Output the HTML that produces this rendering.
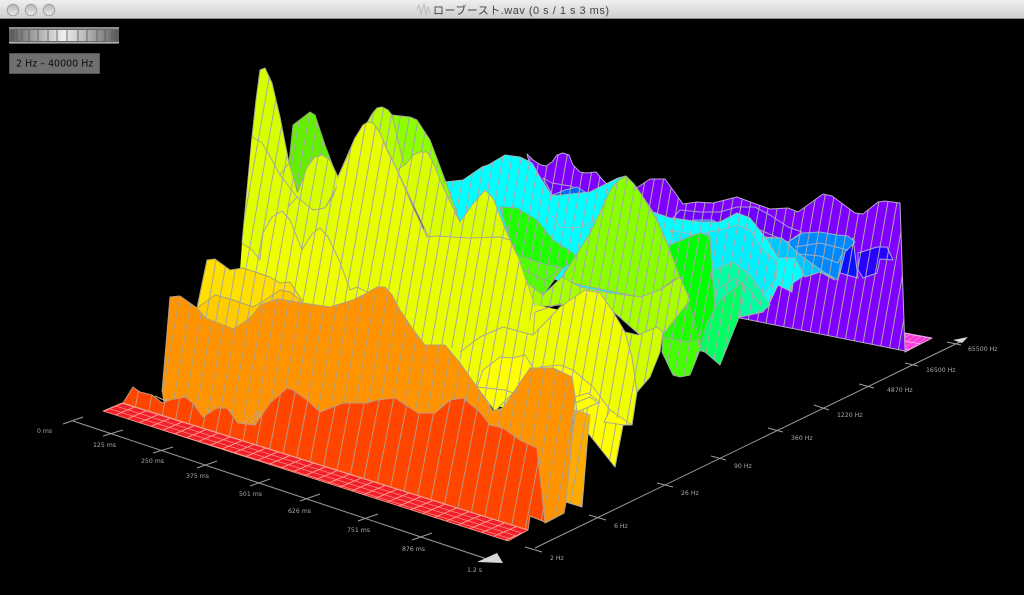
<!DOCTYPE html>
<html><head><meta charset="utf-8"><title>ローブースト.wav</title>
<style>
html,body{margin:0;padding:0;background:#000;width:1024px;height:595px;overflow:hidden}
svg{display:block;filter:blur(.35px)}
.a{font:6.2px "DejaVu Sans",sans-serif;fill:#aaa}
</style></head><body>
<svg width="1024" height="595" viewBox="0 0 1024 595" xmlns="http://www.w3.org/2000/svg" stroke-linejoin="round">
<defs>
<linearGradient id="tb" x1="0" y1="0" x2="0" y2="1"><stop offset="0" stop-color="#efefef"/><stop offset="1" stop-color="#cfcfcf"/></linearGradient>
<linearGradient id="tl" x1="0" y1="0" x2="0" y2="1"><stop offset="0" stop-color="#b4b4b4"/><stop offset="1" stop-color="#ececec"/></linearGradient>
<linearGradient id="sl" x1="0" y1="0" x2="1" y2="0"><stop offset="0" stop-color="#5c5c5c"/><stop offset=".25" stop-color="#a8a8a8"/><stop offset=".5" stop-color="#f0f0f0"/><stop offset=".75" stop-color="#a8a8a8"/><stop offset="1" stop-color="#5c5c5c"/></linearGradient>
<pattern id="g9" width="9" height="20" patternUnits="userSpaceOnUse" patternTransform="rotate(10)"><line x1=".5" y1="0" x2=".5" y2="20" stroke="#aaa8a8" stroke-width="1"/></pattern>
<pattern id="g10" width="10.3" height="20" patternUnits="userSpaceOnUse" patternTransform="rotate(10)"><line x1=".5" y1="0" x2=".5" y2="20" stroke="#a8a89a" stroke-width="1"/></pattern>
<pattern id="g12" width="12" height="20" patternUnits="userSpaceOnUse" patternTransform="rotate(10)"><line x1=".5" y1="0" x2=".5" y2="20" stroke="#b0a080" stroke-width="1"/></pattern>
<pattern id="g14" width="14" height="20" patternUnits="userSpaceOnUse" patternTransform="rotate(11)"><line x1=".5" y1="0" x2=".5" y2="20" stroke="#c09a80" stroke-width="1"/></pattern>
<pattern id="fl" width="100" height="100" patternUnits="userSpaceOnUse" patternTransform="matrix(.1194 .03735 -.0633 .0267 122 403)"><rect width="100" height="100" fill="#f0202c"/><rect width="100" height="14" fill="#ff9a88"/><rect width="12" height="100" fill="#ff9a88"/></pattern>
<pattern id="mg" width="100" height="100" patternUnits="userSpaceOnUse" patternTransform="matrix(.055 .01 -.09 .06 905 333)"><rect width="100" height="100" fill="#f838d8"/><rect width="100" height="12" fill="#ffb0ee"/><rect width="10" height="100" fill="#ffb0ee"/></pattern>
</defs>
<rect width="1024" height="595" fill="#000"/>

<!-- title bar -->
<rect width="1024" height="18" fill="url(#tb)"/>
<rect y="18" width="1024" height="1" fill="#8a8a8a"/>
<g fill="url(#tl)" stroke="#a0a0a0" stroke-width="1"><circle cx="13" cy="10" r="5.7"/><circle cx="31" cy="10" r="5.7"/><circle cx="49" cy="10" r="5.7"/></g>
<path d="M417,9 L419,5 421,14 424,4 426,15 428,7 430,14" fill="none" stroke="#bcbcbc" stroke-width="1.1"/>
<text x="433" y="14" font-family="'Liberation Sans','Noto Sans CJK JP',sans-serif" font-size="11" fill="#444" textLength="176" lengthAdjust="spacing">ローブースト.wav (0 s / 1 s 3 ms)</text>

<!-- slider -->
<rect x="9" y="27" width="110" height="17" fill="#6a6a6a"/>
<rect x="9" y="27.5" width="110" height="1" fill="#b0b0b0"/>
<rect x="9" y="42" width="110" height="1" fill="#b0b0b0"/>
<rect x="9" y="30" width="110" height="11" fill="url(#sl)"/>
<g stroke="#555" stroke-width="1" opacity=".8"><path d="M12,30V41M14,30V41M17,30V41M22,30V41M29,30V41M38,30V41M48,30V41M57,30V41M67,30V41M78,30V41M87,30V41M97,30V41M105,30V41M112,30V41M115,30V41M117,30V41"/></g>
<!-- button -->
<rect x="9.5" y="53.5" width="90" height="20" fill="#707070" stroke="#555"/>
<text x="16" y="66.5" font-family="'DejaVu Sans',sans-serif" font-size="9.5" fill="#0c0c0c">2 Hz – 40000 Hz</text>

<!-- back floor -->
<path d="M905,333 932,338 905,352Z" fill="url(#mg)" stroke="#d8a0d8"/>

<!-- purple back -->
<g fill="#8000ff"><path id="p1" d="M527,154 533,160 541,165 546,166 552,162 557,155 563,153 569,155 573,165 580,172 586,173 596,172 601,178 612,190 638,187 650,179 665,179 673,190 683,204 697,202 713,203 737,197 753,203 770,209 788,208 798,212 823,194 832,196 855,213 863,214 878,202 885,201 900,203 905,351 740,318 560,280Z"/></g><use href="#p1" fill="url(#g9)" stroke="#b4a8c8"/>
<g fill="#7000ff"><path id="p2" d="M673,218 680,210 700,212 720,212 737,207 755,207 770,215 788,227 802,232 788,242 760,230 720,225Z"/></g><use href="#p2" fill="url(#g9)" stroke="#a8a0c8"/>
<g fill="#7000ff"><path id="p3" d="M543,178 552,183 570,186 585,192 553,196Z"/></g><use href="#p3" fill="url(#g9)" stroke="#a8a0c8"/>
<g fill="#0068ff"><path id="b0" d="M553,195 565,190 577,187 585,192 570,198Z"/></g><use href="#b0" fill="url(#g9)" stroke="#9aa8c8"/>
<g fill="#0a88ff"><path id="b1" d="M693,220 713,220 720,225 700,226Z"/></g><use href="#b1" fill="url(#g9)" stroke="#9aa8c8"/>
<!-- right dark blue bits -->
<g fill="#2800ff"><path id="b3" d="M858,253 877,247 887,247 893,260 880,259 877,273 863,278 858,270Z"/></g><use href="#b3" fill="url(#g9)" stroke="#a8a8d8"/>
<g fill="#0c10ff"><path id="b4" d="M845,252 853,238 858,278 840,273Z"/></g><use href="#b4" fill="url(#g9)" stroke="#a8a8d8"/>
<g fill="#0088ff"><path id="b2" d="M788,242 803,233 820,232 837,235 848,236 855,242 845,252 838,280 820,270 795,257Z"/></g><use href="#b2" fill="url(#g9)" stroke="#9ab0c8"/>
<path d="M795,247 820,243 848,250M798,254 820,256 838,263 843,252" fill="none" stroke="#9ab0c8"/>

<!-- cyan -->
<g fill="#00ffff"><path id="c1" d="M445,182 463,180 482,167 488,165 505,155 520,157 532,163 540,177 550,193 553,196 590,192 618,178 626,176 643,197 653,212 670,218 700,222 720,222 737,213 750,218 765,237 777,238 787,248 800,258 805,275 793,283 792,292 778,285 770,302 763,312 740,317 700,330 500,260 460,225Z"/></g><use href="#c1" fill="url(#g9)" stroke="#a0b4b4"/>
<path d="M552,216 560,227 570,228 583,227 595,220" fill="none" stroke="#a0b4b4"/>
<g fill="#00f2ff"><path id="c2" d="M670,230 693,235 720,230 737,225 750,230 763,250 775,260 777,277 763,295 740,317 720,320 690,280Z"/></g><use href="#c2" fill="url(#g9)" stroke="#a0b4b4"/>
<g fill="#00c8ff"><path id="c3" d="M766,238 782,238 800,255 835,280 820,272 805,277 795,258 778,258Z"/></g><use href="#c3" fill="url(#g9)" stroke="#a0b4b4"/>
<g fill="#00ffa0"><path id="s1" d="M713,270 733,262 750,275 765,297 770,305 762,312 740,317 725,330 715,310Z"/></g><use href="#s1" fill="url(#g9)" stroke="#a0b4a8"/>
<path d="M716,290 735,278 750,290 760,305" fill="none" stroke="#a0b4a8"/>

<!-- greens -->
<g fill="#00ff00"><path id="g1" d="M660,248 670,245 700,233 710,237 712,273 717,330 722,345 705,352 680,345 660,300Z"/></g><use href="#g1" fill="url(#g9)" stroke="#90b090"/>
<g fill="#00ff60"><path id="s2" d="M700,350 706,325 720,300 743,282 738,320 730,340 720,365 705,352Z"/></g><use href="#s2" fill="url(#g9)" stroke="#90b0a0"/>
<g fill="#20ff00"><path id="g2" d="M670,280 680,277 692,313 700,340 687,342 663,337Z"/></g><use href="#g2" fill="url(#g9)" stroke="#90b090"/>
<g fill="#44ff00"><path id="g3" d="M663,337 687,342 700,340 700,350 690,375 680,377 673,375 662,352Z"/></g><use href="#g3" fill="url(#g9)" stroke="#90b090"/>
<g fill="#20ff00"><path id="g4" d="M500,207 517,208 537,220 553,240 573,253 578,259 563,268 545,290 520,270Z"/></g><use href="#g4" fill="url(#g9)" stroke="#90b090"/>
<g fill="#50ff00"><path id="g5" d="M517,255 547,265 563,268 543,295 523,283Z"/></g><use href="#g5" fill="url(#g9)" stroke="#98b090"/>
<path d="M523,270 545,280 563,268" fill="none" stroke="#98b090"/>

<!-- lime peak -->
<g fill="#88ff00"><path id="l1" d="M575,257 590,233 602,208 612,187 619,180 626,176 634,184 643,197 657,220 667,243 680,277 673,280 660,290 640,297 590,287 560,280 562,277Z"/></g><use href="#l1" fill="url(#g9)" stroke="#a0ac90"/>
<g fill="#a8ff00"><path id="l2" d="M527,283 543,295 562,277 580,287 610,293 640,297 660,290 680,277 690,300 665,332 640,335 600,300 560,305 535,307Z"/></g><use href="#l2" fill="url(#g9)" stroke="#a4ac90"/>

<!-- yellow back -->
<g fill="#62f000"><path id="a1" d="M289,163 293,125 310,112 315,115 325,145 337,177 298,192Z"/></g><use href="#a1" fill="url(#g9)" stroke="#8fa870"/>
<g fill="#8cff00"><path id="b5" d="M392,115 410,117 417,120 430,140 445,180 460,222 420,152 407,178 400,178Z"/></g><use href="#b5" fill="url(#g9)" stroke="#a0a890"/>
<g fill="#b4ff00"><path id="b6" d="M338,177 367,123 372,114 377,108 382,107 388,110 392,115 407,178 400,178 397,170 377,128 368,122 355,138Z"/></g><use href="#b6" fill="url(#g9)" stroke="#a8a890"/>
<!-- base fill -->
<path d="M240,270 250,200 300,200 450,235 535,305 560,310 625,335 632,357 630,420 590,433 575,420 300,350Z" fill="#e8ff00"/>
<g fill="#d8ff00"><path id="d1" d="M288,200 298,192 307,167 315,157 322,155 330,160 338,177 338,185 325,208 313,210Z"/></g><use href="#d1" fill="url(#g10)" stroke="#a8a898"/>
<g fill="#d6ff00"><path id="sp" d="M240,270 242,243 252,137 256,100 260,70 265,68 272,83 280,117 289,163 298,195 300,260Z"/></g><use href="#sp" fill="url(#g10)"/>
<path d="M242,243 252,137 256,100 260,70 265,68 272,83 280,117 289,163 298,192" fill="none" stroke="#a8a898"/>
<path d="M280,175 289,163" fill="none" stroke="#a8a898"/>
<g fill="#e0ff00"><path id="d2" d="M242,250 252,137 262,143 272,160 280,175 297,197 313,210 325,208 333,196 338,183 345,230 300,270 250,280Z"/></g><use href="#d2" fill="url(#g10)"/>
<path d="M252,137 262,143 272,160 280,175 297,197 313,210 325,208 333,196 338,183" fill="none" stroke="#a8a898"/>
<path d="M288,207 297,197" fill="none" stroke="#a8a898"/>
<g fill="#dcff00"><path id="d3" d="M397,170 407,163 413,155 420,152 427,152 433,162 443,187 460,222 472,205 485,190 493,198 507,233 517,255 535,307 480,290 430,240Z"/></g><use href="#d3" fill="url(#g10)" stroke="#a8a898"/>
<g fill="#e8ff00"><path id="f1" d="M338,177 347,157 355,138 363,125 368,122 373,123 380,133 388,152 397,170 413,207 427,237 437,236 470,238 500,237 510,240 517,255 535,307 520,345 460,350 300,320 330,240Z"/></g><use href="#f1" fill="url(#g10)"/>
<path d="M338,177 347,157 355,138 363,125 368,122 373,123 380,133 388,152 397,170 413,207 427,237 437,236 470,238 500,237 510,240 517,255" fill="none" stroke="#a8a898"/>
<g fill="#f0ff00"><path id="f2" d="M242,243 252,250 260,260 263,233 272,217 282,211 290,220 302,250 312,234 320,228 328,237 340,262 350,290 357,287 367,292 380,300 380,340 240,340Z"/></g><use href="#f2" fill="url(#g10)"/>
<path d="M242,243 252,250 260,260 263,233 272,217 282,211 290,220 302,250 312,234 320,228 328,237 340,262 350,290 357,287 367,292" fill="none" stroke="#a8a898"/>

<!-- gold layers -->
<g fill="#ffe000"><path id="y1" d="M197,308 207,260 215,259 230,270 243,268 270,277 280,283 290,282 303,302 300,330 200,330Z"/></g><use href="#y1" fill="url(#g10)" stroke="#a8a080"/>
<g fill="#ffcc00"><path id="y2" d="M197,308 215,295 233,300 253,307 265,300 280,290 290,292 300,300 300,330 220,335Z"/></g><use href="#y2" fill="url(#g10)" stroke="#a8a080"/>

<!-- front yellow -->
<g fill="#f0ff00"><path id="y3" d="M460,352 480,337 503,327 533,335 560,307 585,290 600,293 612,310 625,332 632,357 637,392 632,425 623,425 615,467 588,433 575,420 460,400Z"/></g><use href="#y3" fill="url(#g10)"/>
<path d="M460,352 480,337 503,327 533,335 560,307 585,290 600,293 612,310 625,332 632,357 637,392 632,425 623,425 615,467 588,433" fill="none" stroke="#a8a898"/>
<path d="M533,335 535,312 562,303" fill="none" stroke="#a8a898"/>
<g fill="#d0ff00"><path id="y4" d="M625,332 638,335 657,327 663,332 660,352 650,377 637,392 632,357Z"/></g><use href="#y4" fill="url(#g10)" stroke="#a8a898"/>
<g fill="#ffff00"><path id="y5" d="M477,387 483,370 500,357 512,358 525,355 533,368 513,393 495,411Z"/></g><use href="#y5" fill="url(#g10)" stroke="#a8a898"/>
<path d="M477,387 505,390 513,393" fill="none" stroke="#a8a898"/>
<g fill="#ffff00"><path id="y6" d="M540,367 560,365 573,370 593,387 610,410 632,425 623,425 615,467 588,433 583,410 575,397 572,377Z"/></g><use href="#y6" fill="url(#g10)" stroke="#a8a898"/>
<path d="M575,397 588,393 600,402 577,412ZM575,403 590,397 598,403M610,410 604,422 623,425" fill="#ffff00" stroke="#a8a898"/>
<g fill="#ffaa00"><path id="o2" d="M575,410 590,415 588,433 582,507 566,502Z"/></g><use href="#o2" fill="url(#g10)" stroke="#b8a888"/>
<g fill="#ff9f00"><path id="o3" d="M545,523 564,513 547,508Z"/></g><use href="#o3" fill="url(#g12)" stroke="#c0a888"/>

<!-- orange -->
<g fill="#ff9300"><path id="o1" d="M162,392 170,297 180,296 197,308 205,318 233,329 243,323 253,315 260,305 278,299 303,303 330,307 353,300 365,294 377,287 385,287 392,295 400,310 412,328 425,345 445,345 460,363 477,387 493,411 503,408 513,393 530,368 553,368 572,377 575,397 566,502 564,513 545,523 537,518 300,455 165,412Z"/></g><use href="#o1" fill="url(#g12)"/>
<path d="M162,392 170,297 180,296 197,308 205,318 233,329 243,323 253,315 260,305 278,299 303,303 330,307 353,300 365,294 377,287 385,287 392,295 400,310 412,328 425,345 445,345 460,363 477,387 493,411 503,408 513,393 530,368 553,368 572,377 575,397 566,502 564,513 545,523" fill="none" stroke="#b0a080"/>
<path d="M155,396 175,405M163,399 182,402 192,400M205,408 222,420M212,405 232,417M240,425 262,410M248,425 268,408" fill="none" stroke="#c8a880"/>

<!-- red wall -->
<g fill="#ff4500"><path id="r1" d="M123,403 133,387 140,392 152,395 162,403 170,400 185,397 193,403 203,417 217,408 227,408 238,423 255,425 270,403 287,388 293,390 307,400 320,412 343,403 367,403 377,400 395,398 418,413 435,413 450,400 463,398 480,412 490,425 503,428 520,440 537,448 545,522 530,516 528,530Z"/></g><use href="#r1" fill="url(#g14)" stroke="#c09a80"/>
<!-- red floor -->
<path d="M103,411 122,403 528,530 508,541Z" fill="url(#fl)" stroke="#ff9a88" stroke-width=".8"/>

<!-- axes -->
<g stroke="#9c9c9c" stroke-width="1" fill="none">
<path d="M73,421 490,560"/>
<path d="M63,424 83,417M103,436 123,430M153,453 173,447M197,468 217,461M250,486 270,479M300,501 320,494M358,521 378,514M412,540 432,533"/>
<path d="M535,548 962,341"/>
<path d="M525,547 542,552M589,515 606,520M657,483 673,487M711,456 726,460M768,428 783,432M814,405 829,410M859,384 874,388M905,363 918,366M947,342 961,345"/>
</g>
<path d="M477,562 497,553 503,563Z" fill="#d8d8d8"/>
<path d="M953,340 968,337 962,343Z" fill="#d8d8d8"/>
<g class="a">
<text x="37" y="433">0 ms</text><text x="93" y="447">125 ms</text><text x="141" y="463">250 ms</text><text x="186" y="478">375 ms</text><text x="239" y="496">501 ms</text><text x="288" y="513">626 ms</text><text x="347" y="532">751 ms</text><text x="402" y="551">876 ms</text><text x="467" y="572">1.2 s</text>
<text x="550" y="560">2 Hz</text><text x="614" y="528">6 Hz</text><text x="681" y="495">26 Hz</text><text x="734" y="468">90 Hz</text><text x="791" y="440">360 Hz</text><text x="837" y="417">1220 Hz</text><text x="887" y="392">4870 Hz</text><text x="926" y="372">16500 Hz</text><text x="968" y="351">65500 Hz</text>
</g>
</svg>
</body></html>
